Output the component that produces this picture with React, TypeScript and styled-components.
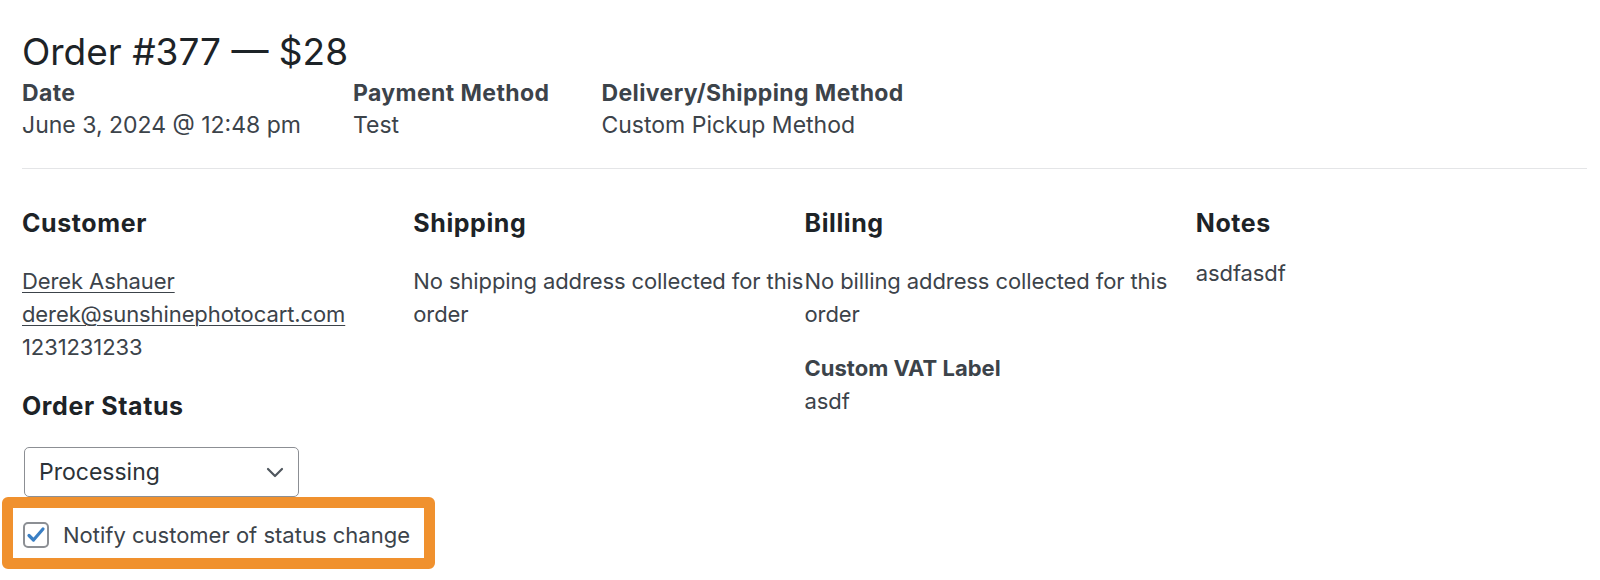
import React from "react";
import styled, { createGlobalStyle } from "styled-components";

const GlobalStyle = createGlobalStyle`
  body {
    margin: 0;
    background: #ffffff;
    font-family: Inter, "Noto Sans", sans-serif;
    color: #3c434a;
  }
`;

const Page = styled.main`
  padding: 27px 13px 0 22px;
`;

const Title = styled.h1`
  margin: 0;
  font-size: 37px;
  line-height: 50px;
  font-weight: 400;
  color: #1d2327;
`;

const MetaRow = styled.div`
  display: flex;
  gap: 52px;
`;

const MetaItem = styled.div`
  display: flex;
  flex-direction: column;
`;

const MetaLabel = styled.span`
  font-size: 23px;
  line-height: 33px;
  font-weight: 700;
  letter-spacing: 0.4px;
  color: #3c434a;
`;

const MetaValue = styled.span`
  font-size: 23px;
  line-height: 30px;
`;

const Divider = styled.hr`
  border: none;
  border-top: 1px solid #e4e5e7;
  margin: 28px 0 0;
`;

const Columns = styled.section`
  display: grid;
  grid-template-columns: repeat(4, minmax(0, 1fr));
  padding-top: 38px;
`;

const Column = styled.div`
  display: flex;
  flex-direction: column;
  align-items: flex-start;
`;

const Heading = styled.h2<{ $gap?: number }>`
  margin: ${({ $gap }) => ($gap ?? 0) + "px"} 0 0;
  font-size: 25px;
  line-height: 32px;
  font-weight: 700;
  letter-spacing: 0.6px;
  color: #1d2327;
`;

const Lines = styled.div<{ $top?: number }>`
  margin-top: ${({ $top }) => ($top ?? 26) + "px"};
  font-size: 22px;
  line-height: 33px;
  letter-spacing: -0.1px;
`;

const SubLabel = styled.div`
  margin-top: 21px;
  font-size: 22px;
  line-height: 33px;
  font-weight: 700;
`;

const Line = styled.div``;

const Link = styled.a`
  color: #3c434a;
  text-decoration: underline;
  text-underline-offset: 3px;
  text-decoration-thickness: 1px;
`;

const Select = styled.div`
  margin: 25px 0 0 2px;
  width: 275px;
  height: 50px;
  box-sizing: border-box;
  border: 1.5px solid #8c8f94;
  border-radius: 5px;
  display: flex;
  align-items: center;
  justify-content: space-between;
  padding: 0 14px 0 14px;
  font-size: 23px;
  color: #2c3338;
  background: #fff;
`;

const Highlight = styled.label`
  margin: 0 0 0 -20px;
  border: 11px solid #f0912e;
  border-radius: 6px;
  display: inline-flex;
  align-items: center;
  gap: 14px;
  padding: 13px 14px 9px 10px;
  font-size: 22px;
  line-height: 28px;
  color: #3c434a;
  white-space: nowrap;
`;

const CheckBox = styled.span`
  width: 26px;
  height: 26px;
  box-sizing: border-box;
  border: 2px solid #8c8f94;
  border-radius: 5px;
  display: flex;
  align-items: center;
  justify-content: center;
  background: #fff;
`;

const Chevron = () => (
  <svg width="18" height="12" viewBox="0 0 18 12" fill="none">
    <path d="M2 3l7 7 7-7" stroke="#50575e" strokeWidth="2.2" strokeLinecap="round" strokeLinejoin="round" />
  </svg>
);

const Check = () => (
  <svg width="20" height="18" viewBox="0 0 20 18" fill="none">
    <path d="M3 9.5l4.5 4.5 9.5-11" stroke="#3a7fc4" strokeWidth="3.2" strokeLinecap="round" strokeLinejoin="round" />
  </svg>
);

export default function App() {
  return (
    <>
      <GlobalStyle />
      <Page>
        <Title>Order #377 — $28</Title>
        <MetaRow>
          <MetaItem>
            <MetaLabel>Date</MetaLabel>
            <MetaValue>June 3, 2024 @ 12:48 pm</MetaValue>
          </MetaItem>
          <MetaItem>
            <MetaLabel>Payment Method</MetaLabel>
            <MetaValue>Test</MetaValue>
          </MetaItem>
          <MetaItem>
            <MetaLabel>Delivery/Shipping Method</MetaLabel>
            <MetaValue>Custom Pickup Method</MetaValue>
          </MetaItem>
        </MetaRow>
        <Divider />
        <Columns>
          <Column>
            <Heading>Customer</Heading>
            <Lines>
              <Line><Link href="#">Derek Ashauer</Link></Line>
              <Line><Link href="#">derek@sunshinephotocart.com</Link></Line>
              <Line>1231231233</Line>
            </Lines>
            <Heading $gap={26}>Order Status</Heading>
            <Select>
              <span>Processing</span>
              <Chevron />
            </Select>
            <Highlight>
              <CheckBox><Check /></CheckBox>
              Notify customer of status change
            </Highlight>
          </Column>
          <Column>
            <Heading>Shipping</Heading>
            <Lines>No shipping address collected for this order</Lines>
          </Column>
          <Column>
            <Heading>Billing</Heading>
            <Lines>No billing address collected for this order</Lines>
            <SubLabel>Custom VAT Label</SubLabel>
            <Lines $top={0}>asdf</Lines>
          </Column>
          <Column>
            <Heading>Notes</Heading>
            <Lines $top={18}>asdfasdf</Lines>
          </Column>
        </Columns>
      </Page>
    </>
  );
}
